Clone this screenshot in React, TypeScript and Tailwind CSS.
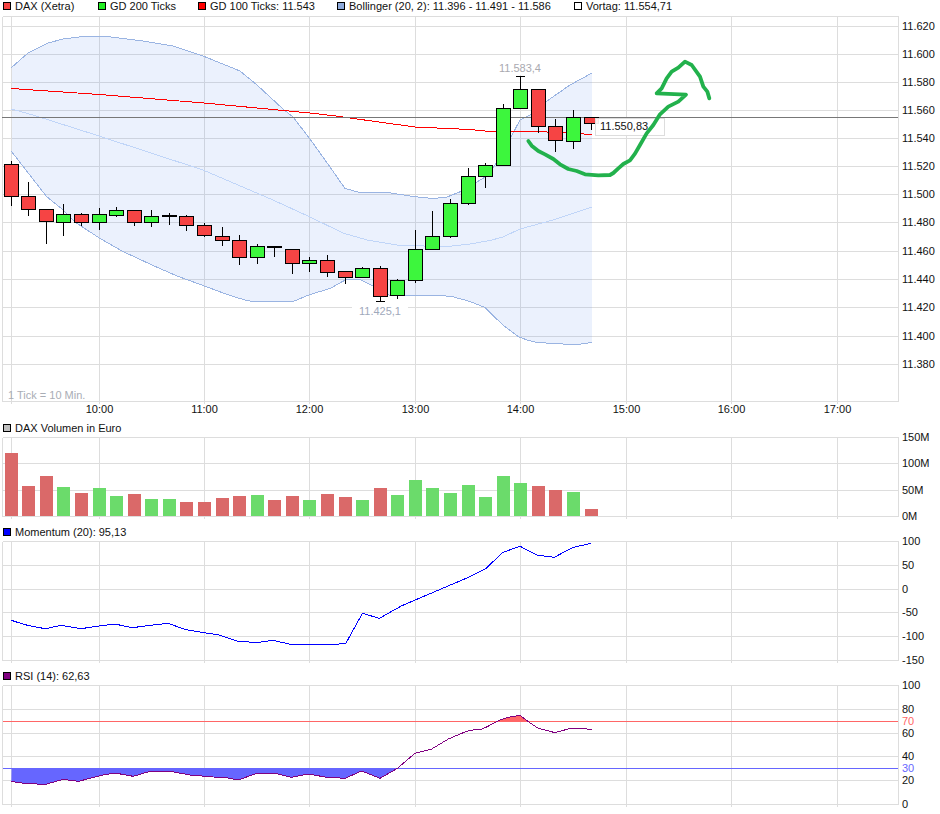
import React from "react";

const XS = [11.5, 99.5, 204.5, 309.5, 415.5, 520.5, 626.5, 731.5, 837.5];
const CX = [11.5,28.5,46.5,63.5,81.5,99.5,116.5,134.5,151.5,169.5,186.5,204.5,222.5,239.5,257.5,274.5,292.5,309.5,327.5,345.5,362.5,380.5,397.5,415.5,432.5,450.5,468.5,485.5,503.5,520.5,538.5,555.5,573.5,591.5];

const RED = "#f64444";
const GREEN = "#3df63d";
type C = [number, number, number, number, "r" | "g" | "d"];
// body top, body bottom, wick top, wick bottom
const CANDLES: C[] = [
  [164.5,196.5,161,205.5,"r"],[196.5,209.5,182,215.5,"r"],[209.5,221.5,209.5,243.5,"r"],[214.5,222.5,204,235.5,"g"],
  [214.5,222.5,213,226,"r"],[214.5,222.5,208,229.5,"g"],[210.5,215.5,207,216.5,"g"],[210.5,222.5,210,225.5,"r"],
  [216.5,222.5,210,226.5,"g"],[215.5,216.5,213,224.5,"d"],[216.5,225.5,215,230.5,"r"],[225.5,235.5,223,236.5,"r"],
  [236.5,240.5,227,245.5,"r"],[240.5,257.5,235,264.5,"r"],[246.5,257.5,244,263.5,"g"],[246.5,247.5,246.5,256.5,"d"],
  [249.5,263.5,249,273.5,"r"],[260.5,263.5,257,272,"g"],[260.5,272.5,255,276.5,"r"],[271.5,277.5,271,283.5,"r"],
  [268.5,277.5,267,277.5,"g"],[268.5,296.5,266,301.5,"r"],[280.5,295.5,279,298.5,"g"],[249.5,280.5,230,282.5,"g"],
  [236.5,249.5,211,249.5,"g"],[203.5,236.5,199,237.5,"g"],[176.5,203.5,168,205,"g"],[165.5,176.5,163,187.5,"g"],
  [108.5,165.5,104,165.5,"g"],[89.5,108.5,76.5,89.5,"g"],[89.5,126.5,89.5,132.5,"r"],[126.5,140.5,119,151.5,"r"],
  [117.5,141.5,110,148.5,"g"],[117.5,123.5,117.5,130,"r"],
];

const UPPER: [number, number][] = [[11.5,67.5],[28,53],[48,43],[63,39],[83,36.5],[107,36.5],[143,41],[173,46],[203,56],[240,71],[257,85],[283,109],[293,117],[310,139],[330,167],[345,188.5],[360,192.5],[388,192.5],[413,196.5],[433,198.5],[447,197],[462,191],[477,182],[485,177],[495,165],[511,137],[520,120],[532,114],[547,101],[570,85],[592,73]];
const LOWER: [number, number][] = [[11.5,151.5],[46.5,196.5],[62,209],[75,222],[100,238.5],[123,251.5],[152,265],[177,276],[203,285.5],[230,295.5],[245,300],[253,301.5],[293,301.5],[310,294.5],[330,288.5],[347,279],[360,279.5],[373,286],[390,295.5],[440,295.5],[452,296.5],[470,301.5],[485,307.5],[493,315.5],[503,325],[518,336.5],[527,340],[537,342.5],[563,344],[577,344.5],[592,342.5]];
const MID: [number, number][] = [[11.5,109],[33,115],[99,136],[203,170],[273,200],[310,217],[343,233],[367,240],[400,245.5],[447,246.5],[470,244],[490,240.5],[503,237],[520,229],[553,220],[592,207]];
const AVG: [number, number][] = [[11.5,88.5],[33,90],[99.5,94.5],[204,103],[310,113],[340,116.5],[350,118],[415,127],[470,129.5],[490,131.5],[510,131.5],[547,132],[567,133],[592,134.5]];

const SCR_A: [number, number][] = [[10,258],[20,272],[40,288],[60,298],[85,312],[105,328],[130,342],[155,348],[180,358],[220,361],[255,360]];
const SCR_B: [number, number][] = [[40,354],[55,340],[70,327],[90,316],[105,296],[120,270],[140,235],[160,210],[180,178],[205,155],[235,140],[258,119],[170,115],[185,100],[200,70],[215,50],[235,38],[255,20],[275,30],[300,65],[310,95],[322,110],[328,130]];

const VOL: [number, "r" | "g"][] = [[453,"r"],[486,"r"],[476,"r"],[487,"g"],[493,"r"],[488,"g"],[496,"g"],[494,"r"],[499,"g"],[499,"g"],[502,"r"],[502,"r"],[498,"r"],[496,"r"],[495,"g"],[500,"r"],[496,"r"],[500,"g"],[494,"r"],[497,"r"],[500,"g"],[488,"r"],[495,"g"],[480,"g"],[488,"g"],[493,"g"],[485,"g"],[497,"g"],[476,"g"],[483,"g"],[486,"r"],[490,"r"],[492,"g"],[509,"r"]];

const MOM: [number, number][] = [[29,286],[60,298],[85,305],[115,311],[155,301],[205,311],[245,304],[290,297],[335,308],[380,301],[425,295],[470,314],[515,323],[555,330],[600,348],[650,353],[690,346],[735,358],[850,358],[875,355],[917,265],[960,280],[1015,243],[1100,200],[1185,157],[1228,132],[1272,82],[1316,64],[1358,90],[1402,97],[1448,68],[1495,55]];

const RSI_A: [number, number][] = [[34,349],[50,352],[75,355],[110,357],[140,357],[165,350],[190,343],[235,349],[270,340],[310,330],[345,324],[400,334],[450,319],[510,319],[570,330],[640,336],[680,338],[715,345],[770,325],[825,325],[875,337],[925,327],[975,336],[1035,340],[1085,318],[1140,340],[1192,310],[1245,265],[1295,252],[1345,222],[1385,205],[1410,196]];
const RSI_B: [number, number][] = [[35,192],[50,186],[85,167],[110,158],[150,151],[175,170],[205,190],[255,203],[305,189],[365,193]];

const pts = (a: [number, number][]) => a.map((p) => p.join(",")).join(" ");
const scribble: [number, number][] = [
  ...SCR_A.map(([x, y]) => [525 + x / 3, 55 + y / 3] as [number, number]),
  ...SCR_B.map(([x, y]) => [600 + x / 3, 55 + y / 3] as [number, number]),
];
const momentum = MOM.map(([x, y]) => [x / 2.53, 525 + y / 3] as [number, number]);
const rsiLeft = RSI_A.map(([x, y]) => [x / 3, 665 + y / 3] as [number, number]);
const rsi = [...rsiLeft, ...RSI_B.map(([x, y]) => [470 + x / 3, 665 + y / 3] as [number, number])];
const rsiLow = rsiLeft.filter((p) => p[0] <= 398);
const rsiHigh = RSI_B.map(([x, y]) => [470 + x / 3, 665 + y / 3] as [number, number]).filter((p) => p[0] >= 498 && p[0] <= 529);

function Grid({ ys, top, bottom }: { ys: number[]; top: number; bottom: number }) {
  return (
    <g stroke="#dddddd" strokeWidth={1} shapeRendering="crispEdges">
      {ys.map((y) => (
        <line key={y} x1={2.5} x2={898.5} y1={y} y2={y} />
      ))}
      <line x1={2.5} x2={2.5} y1={top} y2={bottom} />
      <line x1={898.5} x2={898.5} y1={top} y2={bottom} />
      {XS.map((x) => (
        <line key={x} x1={x} x2={x} y1={top} y2={bottom + 2} />
      ))}
    </g>
  );
}

function AxisLabels({ items }: { items: [string, number, string?][] }) {
  return (
    <g fontSize={11} fill="#111111">
      {items.map(([t, y, c]) => (
        <text key={t} x={902} y={y} fill={c || "#111111"}>
          {t}
        </text>
      ))}
    </g>
  );
}

function Legend({ color, className, children }: { color: string; className?: string; children: React.ReactNode }) {
  return (
    <div className={`flex items-center gap-1 whitespace-nowrap ${className ?? ""}`}>
      <span className="block w-2 h-2 border border-black box-border" style={{ backgroundColor: color }} />
      <span>{children}</span>
    </div>
  );
}

export default function App() {
  return (
    <div className="w-[940px] h-[814px] bg-white overflow-hidden font-['Liberation_Sans',Arial,sans-serif] text-[11px] text-[#111]">
      <div className="h-4 pl-[3px] flex items-center pb-[5px] pt-[1px] box-border leading-none">
        <Legend color="#f64444" className="w-[95px]">DAX (Xetra)</Legend>
        <Legend color="#22ee22" className="w-[100px]">GD 200 Ticks</Legend>
        <Legend color="#ff0000" className="w-[139px]">GD 100 Ticks: 11.543</Legend>
        <Legend color="#8eaadb" className="w-[237px]">Bollinger (20, 2): 11.396 - 11.491 - 11.586</Legend>
        <Legend color="#ffffff">Vortag: 11.554,71</Legend>
      </div>

      <svg className="block overflow-visible" width={940} height={404} viewBox="0 16 940 404" fontFamily="'Liberation Sans', Arial, sans-serif">
        <Grid ys={[16.5, 26.5, 54.5, 82.5, 110.5, 138.5, 166.5, 194.5, 222.5, 251.5, 279.5, 307.5, 336.5, 364.5, 401.5]} top={16.5} bottom={401.5} />
        <polygon points={pts([...UPPER, ...[...LOWER].reverse()])} fill="#6495ed" fillOpacity={0.13} stroke="none" shapeRendering="crispEdges" />
        <polyline points={pts(MID)} fill="none" stroke="#c0d5f8" strokeWidth={1} shapeRendering="crispEdges" />
        <polyline points={pts(UPPER)} fill="none" stroke="#9ab4e2" strokeWidth={1} shapeRendering="crispEdges" />
        <polyline points={pts(LOWER)} fill="none" stroke="#9ab4e2" strokeWidth={1} shapeRendering="crispEdges" />
        <polyline points={pts(AVG)} fill="none" stroke="#ff0000" strokeWidth={1} shapeRendering="crispEdges" />
        <line x1={2} x2={898} y1={117.5} y2={117.5} stroke="#777777" shapeRendering="crispEdges" />
        <g shapeRendering="crispEdges" stroke="#000000">
          {CANDLES.map(([t, b, wt, wb, k], i) => {
            const c = CX[i];
            return (
              <g key={i}>
                <line x1={c} x2={c} y1={wt} y2={wb} />
                <rect x={c - 7} y={t} width={14} height={b - t} fill={k === "r" ? RED : k === "g" ? GREEN : "#000000"} />
              </g>
            );
          })}
          <line x1={516} x2={525} y1={76.5} y2={76.5} />
          <line x1={376} x2={385} y1={301.5} y2={301.5} />
        </g>
        <rect x={499} y={61} width={42} height={14} fill="#ffffff" />
        <text x={520} y={72} textAnchor="middle" fontSize={11} fill="#a9a9b0">11.583,4</text>
        <rect x={352} y={304} width={56} height={14} fill="#ffffff" />
        <text x={380} y={315} textAnchor="middle" fontSize={11} fill="#9fa9bb">11.425,1</text>
        <text x={8} y={399} fontSize={11} fill="#a9adb5">1 Tick = 10 Min.</text>
        <rect x={595.5} y={118.5} width={69} height={17} fill="#ffffff" fillOpacity={0.92} stroke="#dddddd" shapeRendering="crispEdges" />
        <text x={600} y={130} fontSize={11} fill="#111111">11.550,83</text>
        <AxisLabels
          items={[
            ["11.620", 30],["11.600", 58],["11.580", 86],["11.560", 114],["11.540", 142],["11.520", 170],["11.500", 198],
            ["11.480", 226],["11.460", 255],["11.440", 283],["11.420", 311],["11.400", 340],["11.380", 368],
          ]}
        />
        <g fontSize={11} fill="#111111" textAnchor="middle">
          {["10:00", "11:00", "12:00", "13:00", "14:00", "15:00", "16:00", "17:00"].map((t, i) => (
            <text key={t} x={XS[i + 1]} y={413}>{t}</text>
          ))}
        </g>
        <polyline points={pts(scribble)} fill="none" stroke="#22b14c" strokeWidth={3.8} strokeLinejoin="round" strokeLinecap="round" />
      </svg>

      <div className="h-[13px] pl-[3px] pt-[3px] flex items-center box-border leading-none">
        <Legend color="#c0c0c0">DAX Volumen in Euro</Legend>
      </div>
      <svg className="block overflow-visible" width={940} height={92} viewBox="0 433 940 92" fontFamily="'Liberation Sans', Arial, sans-serif">
        <Grid ys={[437.5, 463.5, 490.5, 516.5]} top={437.5} bottom={516.5} />
        <g shapeRendering="crispEdges">
          {VOL.map(([t, k], i) => (
            <rect key={i} x={CX[i] - 6.5} y={t} width={13} height={516 - t} fill={k === "r" ? "#da6969" : "#6bdb6b"} />
          ))}
        </g>
        <AxisLabels items={[["150M", 441], ["100M", 467], ["50M", 494], ["0M", 520]]} />
      </svg>

      <div className="h-3 pl-[3px] pt-[2px] flex items-center box-border leading-none">
        <Legend color="#0000ff">Momentum (20): 95,13</Legend>
      </div>
      <svg className="block overflow-visible" width={940} height={132} viewBox="0 537 940 132" fontFamily="'Liberation Sans', Arial, sans-serif">
        <Grid ys={[541.5, 565.5, 589.5, 612.5, 636.5, 660.5]} top={541.5} bottom={660.5} />
        <polyline points={pts(momentum)} fill="none" stroke="#0000ff" strokeWidth={1} shapeRendering="crispEdges" />
        <AxisLabels items={[["100", 545], ["50", 569], ["0", 593], ["-50", 616], ["-100", 640], ["-150", 664]]} />
      </svg>

      <div className="h-3 pl-[3px] pt-[2px] flex items-center box-border leading-none">
        <Legend color="#800080">RSI (14): 62,63</Legend>
      </div>
      <svg className="block overflow-visible" width={940} height={133} viewBox="0 681 940 133" fontFamily="'Liberation Sans', Arial, sans-serif">
        <Grid ys={[685.5, 709.5, 733.5, 756.5, 780.5, 804.5]} top={685.5} bottom={804.5} />
        <polygon points={pts([[11.5, 768.5], ...rsiLow, [398, 768.5]])} fill="#6666ff" />
        <polygon points={pts([[498, 721.5], ...rsiHigh, [529, 721.5]])} fill="#ff6666" />
        <line x1={2.5} x2={898} y1={721.5} y2={721.5} stroke="#ff6666" shapeRendering="crispEdges" />
        <line x1={2.5} x2={898} y1={768.5} y2={768.5} stroke="#6666ff" shapeRendering="crispEdges" />
        <polyline points={pts(rsi)} fill="none" stroke="#800080" strokeWidth={1} shapeRendering="crispEdges" />
        <AxisLabels
          items={[
            ["100", 689], ["80", 713], ["70", 725, "#ff6666"], ["60", 737], ["40", 760], ["30", 772, "#6666ff"], ["20", 784], ["0", 808],
          ]}
        />
      </svg>
    </div>
  );
}
